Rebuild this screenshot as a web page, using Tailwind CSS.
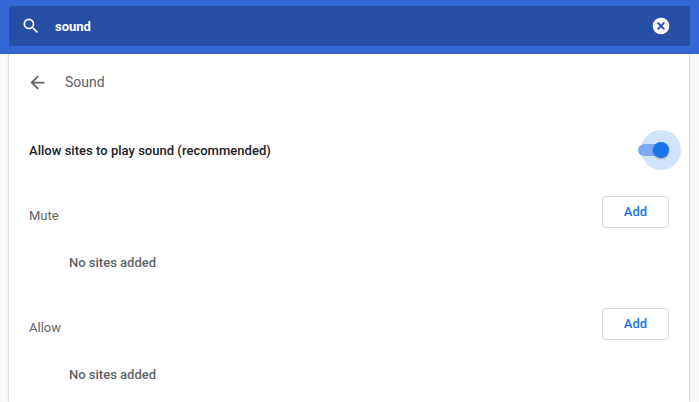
<!DOCTYPE html>
<html lang="en">
  <head>
    <meta charset="UTF-8" />
    <title>Sound</title>
    <script src="https://cdn.jsdelivr.net/npm/@tailwindcss/browser@4"></script>
  </head>
  <body class="h-[402px] w-[699px] overflow-hidden bg-[#f8f9fa] font-['Roboto',sans-serif] antialiased">
    <header class="h-[54px] bg-[#3367d6] pl-[9px] pr-[9px] pt-[6px]">
      <div class="flex h-[40px] items-center rounded-[2px] bg-[#264fa5] pl-[12px] pr-[19px]">
        <svg class="h-[20px] w-[20px] shrink-0" viewBox="0 0 24 24" fill="#fff">
          <path d="M15.5 14h-.79l-.28-.27A6.47 6.47 0 0 0 16 9.5 6.5 6.5 0 1 0 9.5 16c1.61 0 3.09-.59 4.23-1.57l.27.28v.79l5 4.99L20.49 19l-4.99-5zm-6 0C7.01 14 5 11.99 5 9.5S7.01 5 9.5 5 14 7.01 14 9.5 11.99 14 9.5 14z" />
        </svg>
        <span class="ml-[14px] mt-[1px] text-[13px] font-bold text-white">sound</span>
        <svg class="ml-auto h-[20px] w-[20px]" viewBox="0 0 24 24">
          <circle cx="12" cy="12" r="10" fill="#fff" />
          <path d="M8 8l8 8M16 8l-8 8" stroke="#264fa5" stroke-width="2.4" />
        </svg>
      </div>
    </header>
    <main class="ml-[9px] mr-[10px] h-[348px] bg-white pl-[20px] pr-[20px] shadow-[0_0_2px_rgba(60,64,67,0.45)]">
      <div class="flex h-[56px] items-center">
        <svg class="-ml-[2px] h-[21px] w-[21px]" viewBox="0 0 24 24" fill="#5f6368">
          <path d="M20 11H7.83l5.59-5.59L12 4l-8 8 8 8 1.41-1.41L7.83 13H20v-2z" />
        </svg>
        <h1 class="ml-[17px] text-[14px] font-normal text-[#5f6368]">Sound</h1>
      </div>
      <div class="mt-[20px] flex h-[40px] items-center justify-between">
        <span class="mt-[2px] text-[13px] tracking-[0.025px] font-medium text-[#202124]">Allow sites to play sound (recommended)</span>
        <div class="relative mr-[3px] h-[12px] w-[28px] rounded-full">
          <div class="absolute left-[3px] top-[-14px] h-[40px] w-[40px] rounded-full bg-[#d2e3fc]"></div>
          <div class="absolute left-0 top-0 h-[12px] w-[28px] rounded-full bg-[#7baaf7]"></div>
          <div class="absolute left-[15px] top-[-2px] h-[16px] w-[16px] rounded-full bg-[#1a73e8] shadow-[0_1px_2px_rgba(60,64,67,0.4)]"></div>
        </div>
      </div>
      <section class="mt-[26px] flex h-[32px] items-center justify-between">
        <h2 class="mt-[8px] text-[13px] font-normal text-[#5f6368]">Mute</h2>
        <button class="h-[32px] w-[67px] rounded-[4px] border border-[#dadce0] bg-white text-[13px] font-medium text-[#1a73e8]">Add</button>
      </section>
      <p class="mt-[25px] pl-[40px] text-[13px] leading-[20px] font-medium text-[#5f6368]">No sites added</p>
      <section class="mt-[35px] flex h-[32px] items-center justify-between">
        <h2 class="mt-[8px] text-[13px] font-normal text-[#5f6368]">Allow</h2>
        <button class="h-[32px] w-[67px] rounded-[4px] border border-[#dadce0] bg-white text-[13px] font-medium text-[#1a73e8]">Add</button>
      </section>
      <p class="mt-[25px] pl-[40px] text-[13px] leading-[20px] font-medium text-[#5f6368]">No sites added</p>
    </main>
  </body>
</html>
